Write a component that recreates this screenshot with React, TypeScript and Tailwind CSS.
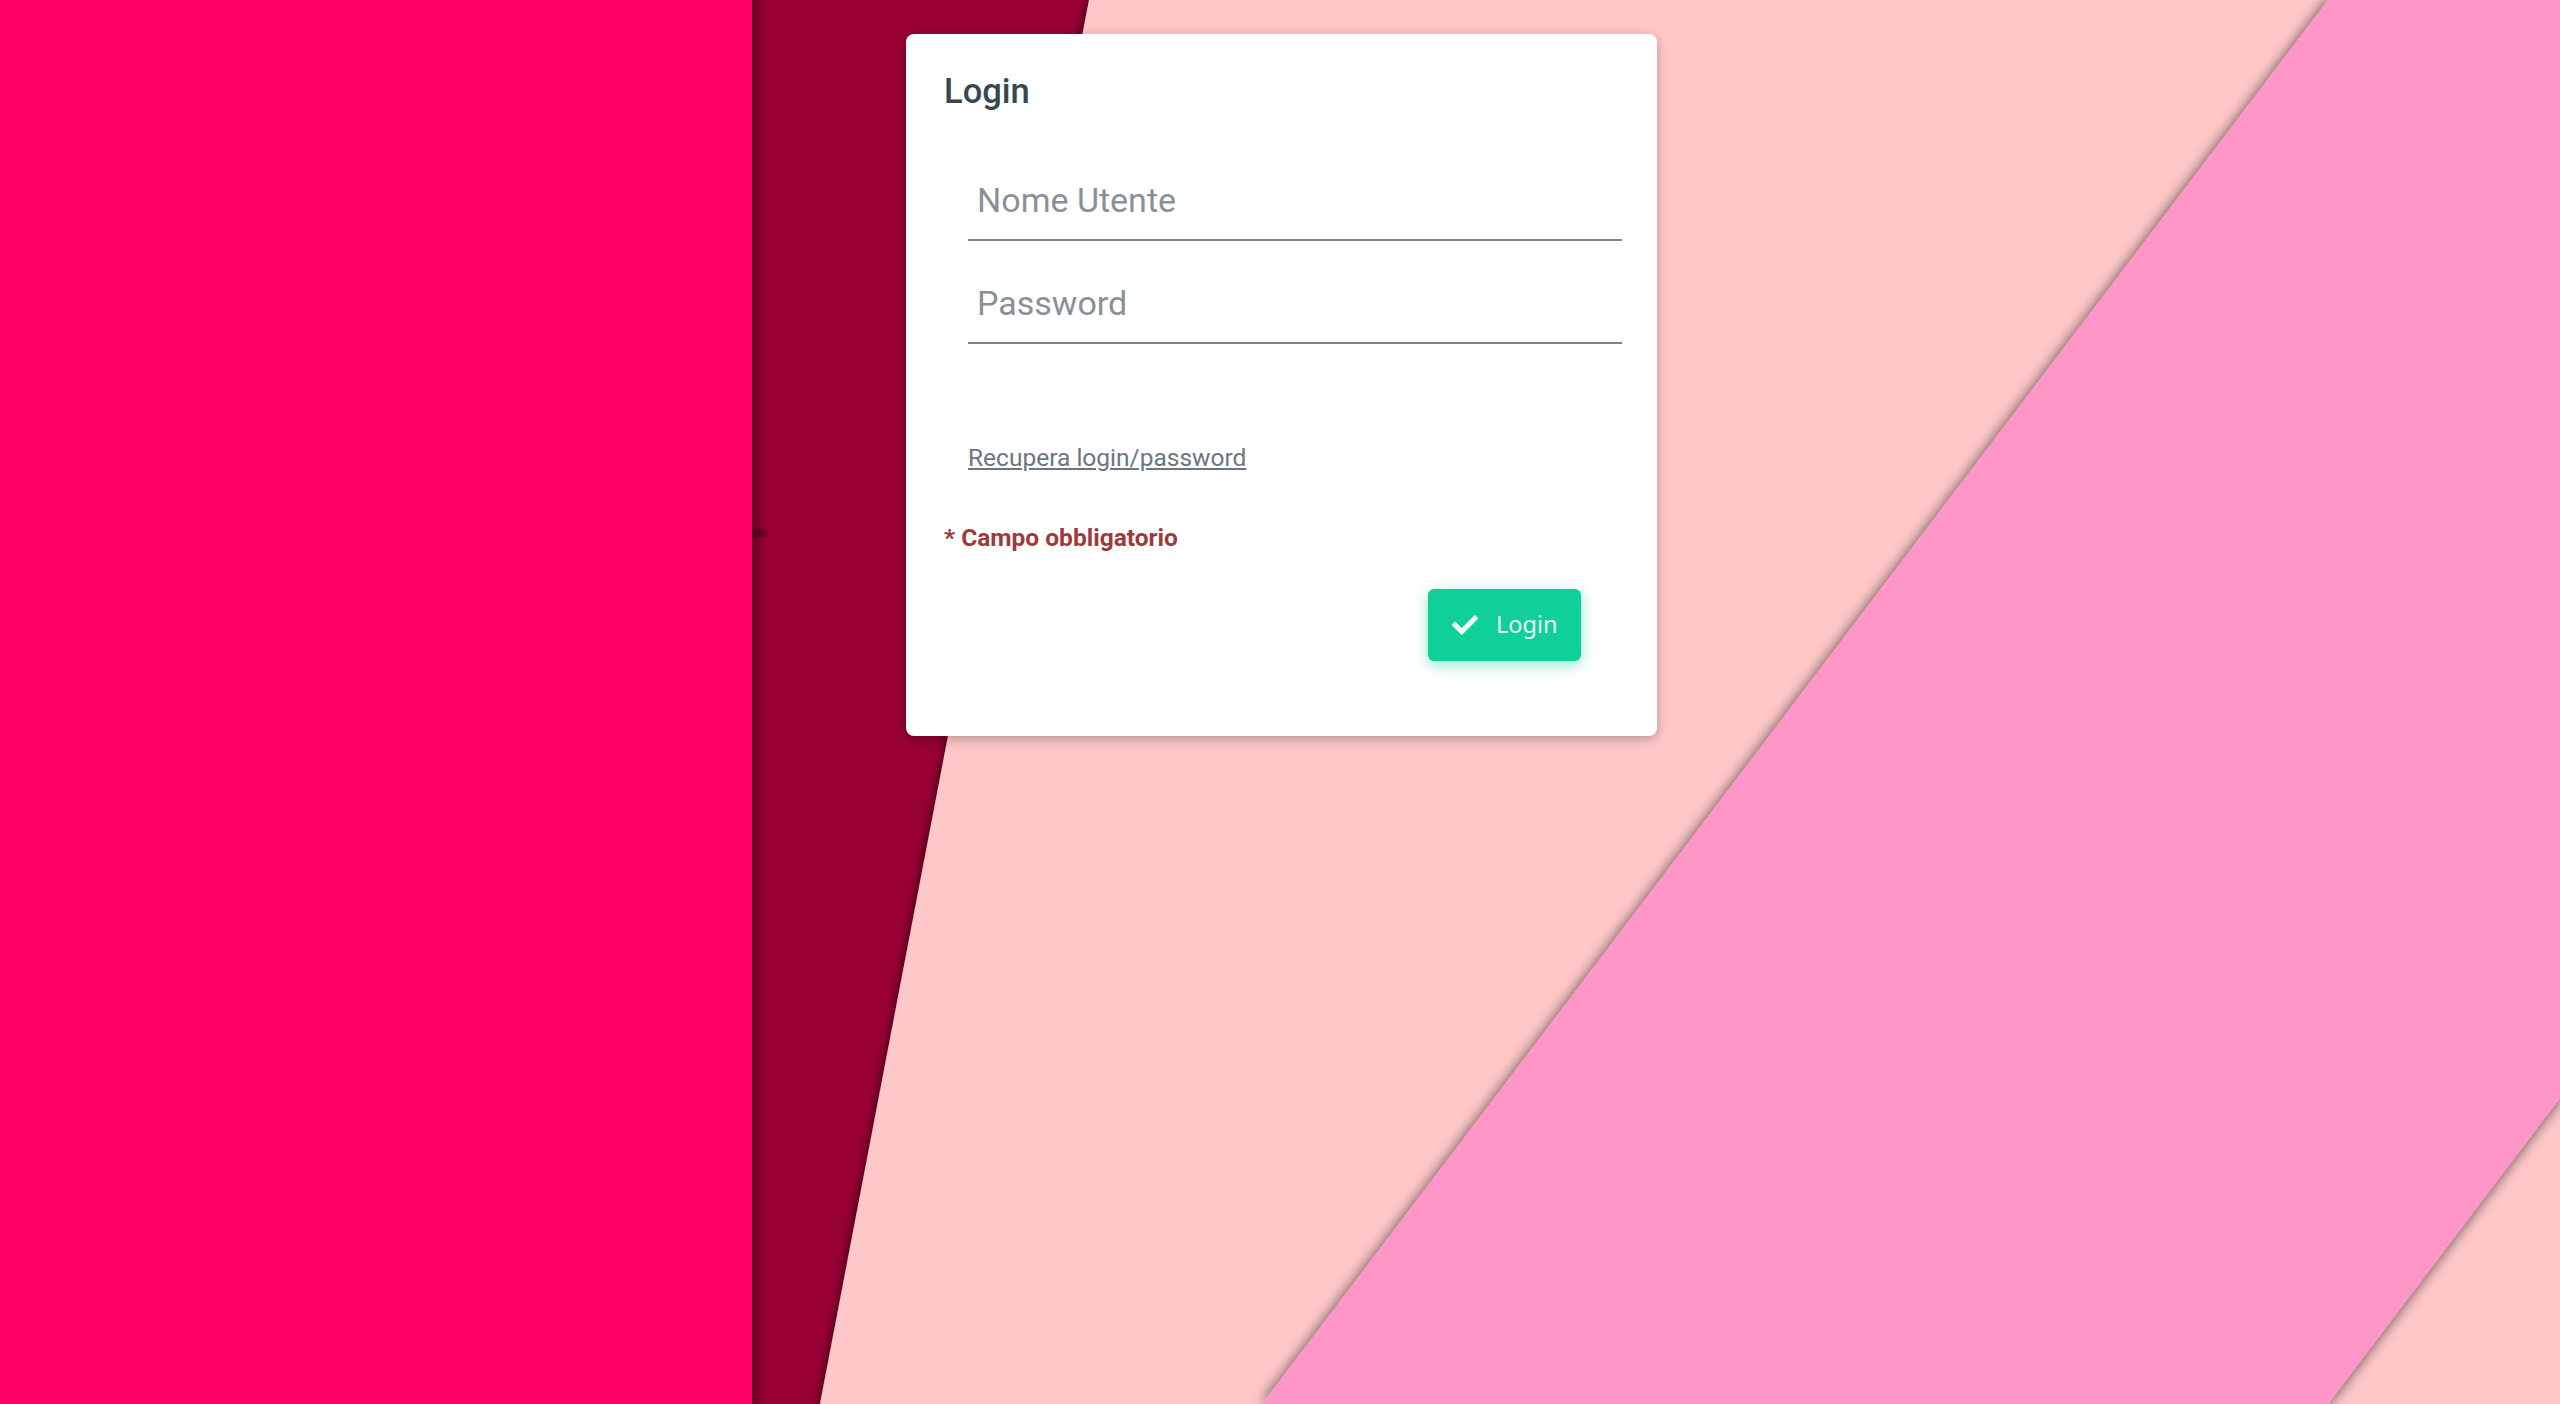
import { FaCheck } from 'react-icons/fa';

function Backdrop() {
  return (
    <svg
      className="absolute inset-0 h-full w-full"
      viewBox="0 0 2560 1404"
      preserveAspectRatio="none"
    >
      <defs>
        <filter id="edgeLeft" x="-20%" y="-20%" width="140%" height="140%">
          <feDropShadow dx="-2" dy="0" stdDeviation="5" floodColor="#000" floodOpacity="0.55" />
        </filter>
        <filter id="edgeBoth" x="-20%" y="-20%" width="140%" height="140%">
          <feDropShadow dx="0" dy="0" stdDeviation="7" floodColor="#000" floodOpacity="0.65" />
        </filter>
        <filter id="edgeRight" x="-20%" y="-20%" width="140%" height="140%">
          <feDropShadow dx="4" dy="0" stdDeviation="6" floodColor="#000" floodOpacity="0.5" />
        </filter>
        <filter id="soft">
          <feGaussianBlur stdDeviation="2" />
        </filter>
      </defs>
      <rect x="0" y="0" width="2560" height="1404" fill="#990033" />
      <polygon points="1089,0 2560,0 2560,1404 820,1404" fill="#fec8c9" filter="url(#edgeLeft)" />
      <polygon points="2328,0 2560,0 2560,1098 2328,1404 1262,1404" fill="#fe96c8" filter="url(#edgeBoth)" />
      <rect x="752" y="529" width="15" height="8" fill="#3a0016" opacity="0.5" filter="url(#soft)" />
      <rect x="-20" y="-20" width="772" height="1444" fill="#ff0066" filter="url(#edgeRight)" />
    </svg>
  );
}

function LoginCard() {
  return (
    <div className="h-[702px] w-[751px] rounded-lg bg-white pl-[38px] pr-[35px] pt-[37px] shadow-[0_3px_12px_rgba(0,0,0,0.28)]">
      <h1 className="text-[34.5px] font-medium leading-[40px] text-[#37474f]">Login</h1>

      <div className="mt-[68px] flex flex-col gap-[41px] pl-[24px]">
        <input
          type="text"
          placeholder="Nome Utente"
          className="h-[62px] w-full border-b-2 border-[#7f8489] bg-transparent pb-[19px] pl-[9px] pt-[1px] text-[34px] leading-[40px] text-[#333] outline-none placeholder:text-[#8a9097]"
        />
        <input
          type="password"
          placeholder="Password"
          className="h-[62px] w-full border-b-2 border-[#7f8489] bg-transparent pb-[19px] pl-[9px] pt-[1px] text-[34px] leading-[40px] text-[#333] outline-none placeholder:text-[#8a9097]"
        />
      </div>

      <a href="#" className="ml-[24px] mt-[100px] block w-fit text-[24.5px] leading-[28px] text-[#6c7680] underline">
        Recupera login/password
      </a>

      <p className="mt-[52px] text-[24.5px] font-bold leading-[28px] text-[#a0393c]">* Campo obbligatorio</p>

      <div className="mt-[37px] flex justify-end pr-[41px]">
        <button className="flex h-[72px] w-[153px] items-center gap-[18px] rounded-md bg-[#10d09a] pl-[24px] font-['Noto_Sans',sans-serif] text-[23.5px] text-white/95 shadow-[0_4px_14px_rgba(16,208,154,0.45)]">
          <FaCheck size={26} />
          <span>Login</span>
        </button>
      </div>
    </div>
  );
}

export default function App() {
  return (
    <div className="relative h-[1404px] w-full overflow-hidden bg-[#990033] font-['Roboto',sans-serif]">
      <Backdrop />
      <div className="relative flex justify-center pl-[3px] pt-[34px]">
        <LoginCard />
      </div>
    </div>
  );
}
